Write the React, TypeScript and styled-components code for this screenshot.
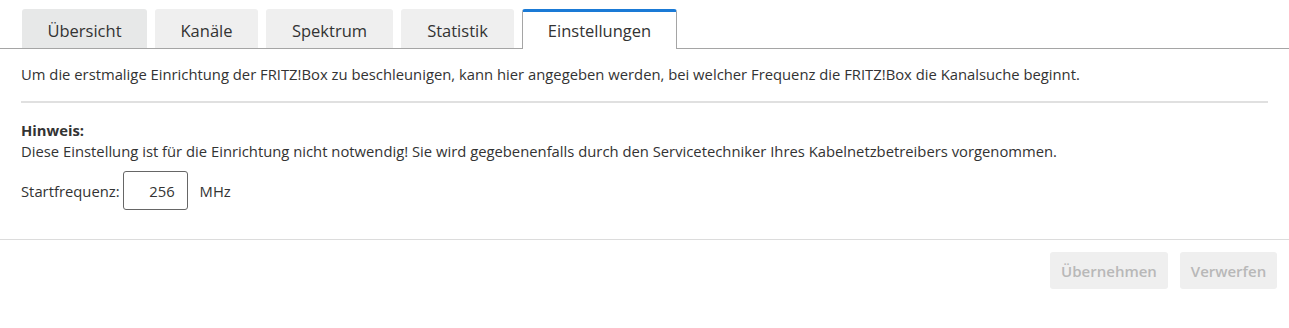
import React, { useState } from 'react';
import styled, { createGlobalStyle } from 'styled-components';

const GlobalStyle = createGlobalStyle`
  html, body { margin: 0; padding: 0; background: #fff; }
  body {
    font-family: "Open Sans", "Liberation Sans", sans-serif;
    color: #333;
  }
`;

const tabs = ['Übersicht', 'Kanäle', 'Spektrum', 'Statistik', 'Einstellungen'];

const App = () => {
  const [active, setActive] = useState(4);
  const [freq, setFreq] = useState('256');

  return (
    <Page>
      <GlobalStyle />
      <TabBar>
        {tabs.map((t, i) => (
          <Tab key={t} $active={i === active} $first={i === 0} onClick={() => setActive(i)}>
            {t}
          </Tab>
        ))}
      </TabBar>

      <Content>
        <Intro>
          Um die erstmalige Einrichtung der FRITZ!Box zu beschleunigen, kann hier angegeben werden, bei welcher
          Frequenz die FRITZ!Box die Kanalsuche beginnt.
        </Intro>
        <Divider />
        <NoteTitle>Hinweis:</NoteTitle>
        <NoteText>
          Diese Einstellung ist für die Einrichtung nicht notwendig! Sie wird gegebenenfalls durch den Servicetechniker
          Ihres Kabelnetzbetreibers vorgenommen.
        </NoteText>
        <FieldRow>
          <Label htmlFor="freq">Startfrequenz:</Label>
          <FreqInput id="freq" value={freq} onChange={e => setFreq(e.target.value)} />
          <Unit>MHz</Unit>
        </FieldRow>
      </Content>

      <Footer>
        <ActionButton disabled $width={118}>Übernehmen</ActionButton>
        <ActionButton disabled $width={97}>Verwerfen</ActionButton>
      </Footer>
    </Page>
  );
};

const Page = styled.div`
  width: 100%;
  padding-top: 9px;
`;

const TabBar = styled.div`
  display: flex;
  gap: 8px;
  padding-left: 22px;
  border-bottom: 1px solid #a5a5a5;
  height: 39px;
`;

const Tab = styled.button<{ $active: boolean; $first: boolean }>`
  height: ${p => (p.$active ? '40px' : '39px')};
  padding: 0;
  padding-top: ${p => (p.$active ? '0' : '3px')};
  border: ${p => (p.$active ? '1px solid #a5a5a5' : 'none')};
  border-top: ${p => (p.$active ? '3px solid #1a7ad6' : 'none')};
  border-bottom: none;
  border-radius: 3px 3px 0 0;
  background: ${p => (p.$active ? '#fff' : p.$first ? '#e7e8e8' : '#efefef')};
  font-family: inherit;
  font-size: 16.5px;
  color: #333;
  cursor: pointer;
  &:nth-child(1) { width: 125px; }
  &:nth-child(2) { width: 103px; }
  &:nth-child(3) { width: 127px; }
  &:nth-child(4) { width: 113px; }
  &:nth-child(5) { width: 155px; }
`;

const Content = styled.div`
  padding: 14px 21px 0 21px;
`;

const Intro = styled.p`
  margin: 0;
  font-size: 14.8px;
  line-height: 22px;
`;

const Divider = styled.div`
  height: 2px;
  background: #e0e0e0;
  margin: 16px 0 17px;
`;

const NoteTitle = styled.div`
  font-size: 14.8px;
  font-weight: 700;
  line-height: 20px;
`;

const NoteText = styled.p`
  margin: 0;
  font-size: 14.8px;
  line-height: 22px;
`;

const FieldRow = styled.div`
  display: flex;
  align-items: center;
  margin-top: 9px;
`;

const Label = styled.label`
  font-size: 14.8px;
  margin-right: 3px;
`;

const FreqInput = styled.input`
  width: 65px;
  height: 39px;
  box-sizing: border-box;
  border: 1px solid #666;
  border-radius: 3px;
  padding: 0 12px 0 0;
  text-align: right;
  font-family: inherit;
  font-size: 14.8px;
  color: #333;
  outline: none;
`;

const Unit = styled.span`
  font-size: 14.8px;
  margin-left: 12px;
`;

const Footer = styled.div`
  margin-top: 29px;
  border-top: 1px solid #dcdcdc;
  display: flex;
  justify-content: flex-end;
  gap: 12px;
  padding: 12px 12px 0 0;
`;

const ActionButton = styled.button<{ $width: number }>`
  width: ${p => p.$width}px;
  height: 37px;
  border: none;
  border-radius: 3px;
  background: #efefef;
  color: #b8b8b8;
  font-family: inherit;
  font-size: 15px;
  font-weight: 600;
`;

export default App;
